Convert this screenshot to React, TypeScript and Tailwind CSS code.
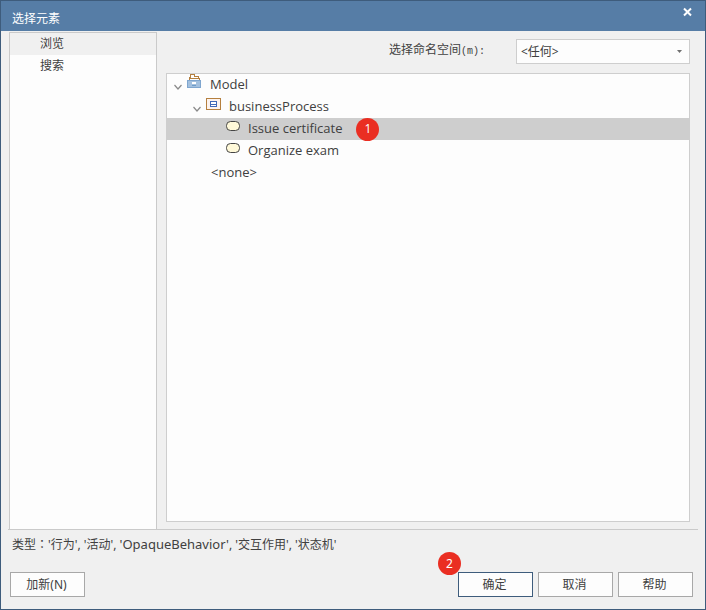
import { useState } from "react";
import clsx from "clsx";

interface TreeItem {
  id: string;
  label: string;
  icon: "model" | "package" | "activity" | "none";
  rowClass: string;
  expanded?: boolean;
  badge?: number;
}

const items: TreeItem[] = [
  { id: "model", label: "Model", icon: "model", rowClass: "pl-1.5", expanded: true },
  { id: "process", label: "businessProcess", icon: "package", rowClass: "pl-[25px]", expanded: true },
  { id: "issue", label: "Issue certificate", icon: "activity", rowClass: "pl-[58px]", badge: 1 },
  { id: "exam", label: "Organize exam", icon: "activity", rowClass: "pl-[58px]" },
  { id: "none", label: "<none>", icon: "none", rowClass: "pl-11" },
];

const tabs = ["浏览", "搜索"];

function ModelIcon() {
  return (
    <svg className="-mt-1.5 h-4 w-4 shrink-0" viewBox="0 0 16 16" fill="none" shapeRendering="crispEdges">
      <path d="M2.5 6V3.5H3.5V0.5H7.5V2.5H11.5V4M2 4.5H12.5V6" stroke="#b5803f" />
      <rect x="0.5" y="6.5" width="13" height="7" fill="#a3c0de" stroke="#7fa6cf" />
      <path d="M5 8h4v2H5z" fill="#fff" />
      <path d="M5 11.5h4" stroke="#6d9bc8" />
    </svg>
  );
}

function PackageIcon() {
  return (
    <svg className="-mt-1 h-4 w-4 shrink-0" viewBox="0 0 16 16" fill="none" shapeRendering="crispEdges">
      <rect x="0.5" y="1.5" width="14" height="11" fill="#fdf3ee" stroke="#b5803f" />
      <rect x="4.5" y="4.5" width="6" height="5" fill="#fff" stroke="#4169b8" />
      <path d="M4 7.5h7" stroke="#4169b8" />
    </svg>
  );
}

function ActivityIcon() {
  return (
    <svg className="-mt-1.5 h-4 w-4 shrink-0" viewBox="0 0 16 16" fill="none">
      <rect x="1.5" y="3.5" width="13" height="9" rx="4" fill="#fff9d9" stroke="#454545" />
    </svg>
  );
}

function Chevron() {
  return (
    <svg className="mt-1 h-2.5 w-2.5 shrink-0" viewBox="0 0 10 10" fill="none">
      <path d="M1.5 3L5 7L8.5 3" stroke="#8a8a8a" strokeWidth="1.2" />
    </svg>
  );
}

function Badge({ value, className }: { value: number; className?: string }) {
  return (
    <span
      className={clsx(
        "flex h-[23px] w-[23px] shrink-0 items-center justify-center rounded-full bg-[#ea2e22] text-xs text-white",
        className
      )}
    >
      {value}
    </span>
  );
}

export default function App() {
  const [tab, setTab] = useState("浏览");
  const [selected, setSelected] = useState("issue");

  const buttonClass = "h-[25px] w-[75px] border bg-[#fdfdfd] pr-0.5 text-xs";

  return (
    <div className="flex min-h-screen flex-col border border-[#3e5c7c] bg-[#f0f0f0] font-['Noto_Sans','Noto_Sans_CJK_SC',sans-serif] text-xs text-[#404040]">
      {/* Title bar */}
      <header className="flex h-[30px] items-start justify-between bg-[#567da6] pr-3 pl-[11px] text-white">
        <h1 className="pt-[9px] leading-[18px]">选择元素</h1>
        <button type="button" aria-label="关闭" className="pt-1.5">
          <svg className="h-[10px] w-[12px]" viewBox="0 0 12 10" fill="none">
            <path d="M3 1.5L10 8.5M10 1.5L3 8.5" stroke="currentColor" strokeWidth="2" />
          </svg>
        </button>
      </header>

      {/* Body */}
      <main className="mx-[7px] flex flex-1 border-b border-[#cacaca] pl-px">
        <nav className="mt-px w-[148px] shrink-0 border border-b-0 border-[#cacaca] bg-[#fdfdfd]">
          {tabs.map((name) => (
            <button
              key={name}
              type="button"
              onClick={() => setTab(name)}
              className={clsx("block h-[22px] w-full pl-[30px] text-left", tab === name && "bg-[#f0f0f0]")}
            >
              {name}
            </button>
          ))}
        </nav>

        <section className="flex flex-1 flex-col pt-2 pr-2 pb-[7px] pl-[9px]">
          <div className="flex justify-end">
            <label htmlFor="namespace" className="mr-[31px] pt-0.5 leading-[18px]">
              选择命名空间<span className="font-['Liberation_Mono',monospace] text-[10px]">(m):</span>
            </label>
            <div className="relative w-[174px]">
              <select
                id="namespace"
                className="h-[25px] w-full appearance-none border border-[#cecece] bg-[#fdfdfd] px-1 text-xs outline-none"
              >
                <option>&lt;任何&gt;</option>
              </select>
              <svg className="pointer-events-none absolute top-[11px] right-2 h-[3px] w-[5px]" viewBox="0 0 5 3">
                <path d="M0 0h5L2.5 3z" fill="#707070" />
              </svg>
            </div>
          </div>

          <ul
            role="tree"
            aria-label="Model"
            className="mt-[9px] flex-1 border border-[#cecece] bg-[#fdfdfd] font-['Open_Sans','Noto_Sans_CJK_SC',sans-serif] text-[13px]"
          >
            {items.map((item) => (
              <li
                key={item.id}
                role="treeitem"
                aria-selected={selected === item.id}
                aria-expanded={item.expanded}
                onClick={() => setSelected(item.id)}
                className={clsx(
                  "flex h-[22px] cursor-default items-center",
                  item.rowClass,
                  selected === item.id && "bg-[#cecece]"
                )}
              >
                {item.expanded && <Chevron />}
                {item.icon !== "none" && (
                  <span className={clsx("mr-[7px] flex", item.expanded && "ml-1")}>
                    {item.icon === "model" && <ModelIcon />}
                    {item.icon === "package" && <PackageIcon />}
                    {item.icon === "activity" && <ActivityIcon />}
                  </span>
                )}
                <span>{item.label}</span>
                {item.badge && <Badge value={item.badge} className="ml-3.5" />}
              </li>
            ))}
          </ul>
        </section>
      </main>

      {/* Footer */}
      <footer className="pr-3 pb-3 pl-[9px]">
        <p className="pt-[5px] pl-0.5 leading-[18px]">
          类型<span className="font-['Noto_Sans_CJK_TC',sans-serif]">：</span>'行为', '活动',{" "}
          <span className="text-[13px]">'OpaqueBehavior'</span>, '交互作用', '状态机'
        </p>
        <div className="mt-[18px] flex gap-[5px]">
          <button type="button" className={clsx(buttonClass, "mr-auto border-[#a8a8a8]")}>
            加新(N)
          </button>
          <div className="relative flex">
            <button type="button" className={clsx(buttonClass, "border-[#3e5c7c]")}>
              确定
            </button>
            <Badge value={2} className="absolute -top-5 -left-5" />
          </div>
          <button type="button" className={clsx(buttonClass, "border-[#a8a8a8]")}>
            取消
          </button>
          <button type="button" className={clsx(buttonClass, "border-[#a8a8a8]")}>
            帮助
          </button>
        </div>
      </footer>
    </div>
  );
}
